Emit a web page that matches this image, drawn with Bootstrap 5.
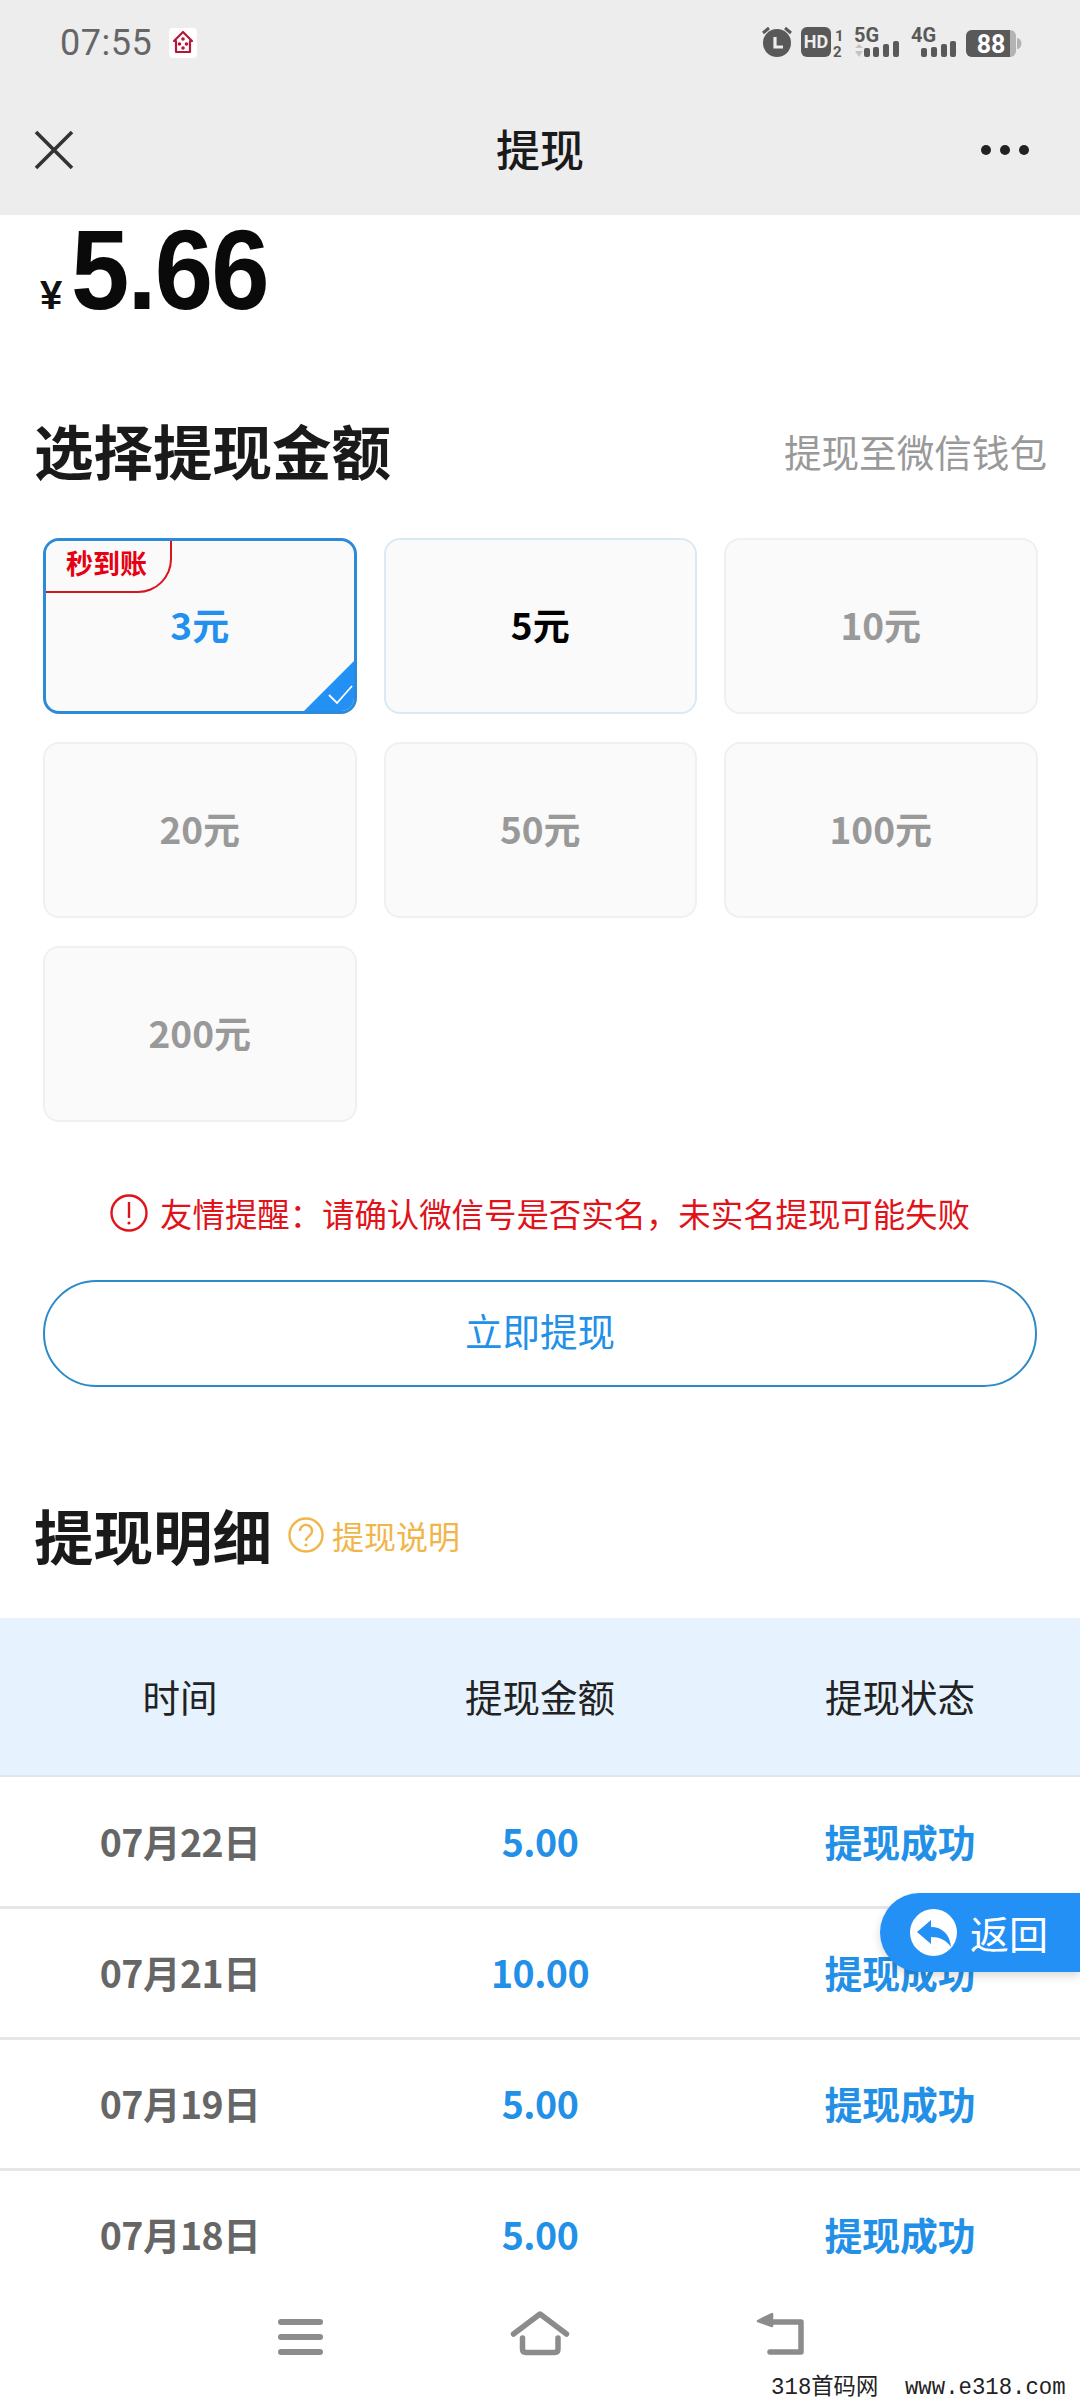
<!DOCTYPE html>
<html lang="zh">
<head>
  <meta charset="UTF-8">
  <title>提现</title>
  <link href="https://cdn.jsdelivr.net/npm/bootstrap@5.3.3/dist/css/bootstrap.min.css" rel="stylesheet">
  <style>
    body { font-family: "Noto Sans CJK SC", "Liberation Sans", sans-serif; background: #fff; }
    .phone { width: 1080px; height: 2400px; overflow: hidden; position: relative; background: #fff; }

    .topbar { height: 215px; background: #ededed; }
    .statusbar { height: 85px; padding: 0 58px 0 60px; }
    .clock { font-family: Roboto, sans-serif; font-size: 36px; color: #666; line-height: 1; letter-spacing: .5px; }
    .titlebar { height: 130px; padding: 0 50px 0 34px; position: relative; }
    .page-title { font-size: 44px; font-weight: 500; color: #1a1a1a; position: absolute; left: 0; right: 0; text-align: center; line-height: 1; top: 41px; }

    .amount-box { height: 194px; padding: 0 0 0 40px; align-items: baseline; margin-top: -3px; margin-bottom: 3px; }
    .yen { font-family: "Liberation Sans", sans-serif; font-weight: 700; font-size: 40px; color: #111; margin-right: 9px; line-height: 1; }
    .amount { font-family: "Liberation Sans", sans-serif; font-weight: 700; font-size: 114px; color: #0a0a0a; line-height: 116px; letter-spacing: -2px; display: inline-block; transform: scaleX(.92); transform-origin: left center; }

    .sec-head { font-size: 59.5px; font-weight: 700; color: #1a1a1a; line-height: 80px; }
    .pick-head { padding: 0 33px 0 34px; }
    .pick-note { font-size: 37.6px; color: #999; line-height: 1; margin-top: 3px; }

    .tile-grid { display: grid; grid-template-columns: repeat(3, 313.5px); gap: 28px 27px; padding: 0 43px; margin-top: 49px; }
    .tile { height: 176px; border: 2px solid #f0f0f0; border-radius: 16px; background: #fafafa; font-size: 37px; font-weight: 700; color: #999; position: relative; overflow: hidden; padding-bottom: 2px; }
    .tile-light { border-color: #d9eaf4; color: #000; }
    .tile-on { border: 3px solid #2d8ad6; color: #2390f0; }
    .fast-tag { position: absolute; left: -3px; top: -3px; width: 129px; height: 55px; border: 2px solid #d8141c; border-width: 0 2px 2px 0; border-bottom-right-radius: 34px; background: #fafafa; color: #e60012; font-size: 27px; font-weight: 700; line-height: 50px; text-align: center; }
    .corner { position: absolute; right: -3px; bottom: -3px; width: 56px; height: 56px; }

    .warn-line { margin-top: 66px; height: 50px; color: #e1131a; font-size: 32.4px; line-height: 50px; gap: 12px; }
    .go-btn { display: block; width: 994px; height: 107px; margin: 42px 0 0 43px; border: 2px solid #2d8ac8; border-radius: 54px; background: #fff; color: #2390e8; font-size: 37.5px; line-height: 1; text-align: center; padding: 0 0 8px; }

    .detail-head { margin-top: 107px; padding-left: 34px; margin-bottom: 44px; }
    .help-link { color: #f0b64a; font-size: 32px; line-height: 1; gap: 8px; margin: 2px 0 0 16px; }

    .cash-table { width: 100%; table-layout: fixed; border-collapse: collapse; }
    .cash-table th { height: 158px; background: #e6f2fe; font-size: 37.5px; font-weight: 400; color: #222; text-align: center; vertical-align: middle; border-bottom: 2px solid #dfe5ea; }
    .cash-table td { height: 131px; font-size: 37.5px; font-weight: 700; text-align: center; vertical-align: middle; border-bottom: 3px solid #e6e6e6; color: #666; letter-spacing: -.5px; }
    .cash-table td.money { color: #2390e8; }
    .cash-table td.state { color: #2390e8; letter-spacing: 0; font-size: 37.8px; }

    .back-float { position: absolute; right: 0; top: 1893px; width: 200px; height: 79px; background: #2390f5; border-radius: 40px 0 0 40px; box-shadow: 0 4px 10px rgba(0, 0, 0, .15); color: #fff; font-size: 39px; padding-left: 30px; gap: 13px; }

    .bottom-nav { position: absolute; left: 0; right: 0; bottom: 0; height: 122px; background: #fff; }
    .bottom-nav svg { position: absolute; top: 0; }
    .nav-menu { left: 277px; }
    .nav-home { left: 510px; }
    .nav-back { left: 755px; }
    .watermark { position: absolute; right: 14px; bottom: 0; font-family: "Liberation Mono", "Noto Sans CJK SC", monospace; font-size: 23px; line-height: 24px; color: #222; white-space: pre; transform-origin: right bottom; transform: scaleX(.97); }
  </style>
</head>
<body class="m-0">
<div class="phone">

  <!-- top gray bar -->
  <div class="topbar">
    <div class="statusbar d-flex align-items-center justify-content-between">
      <div class="d-flex align-items-center">
        <span class="clock">07:55</span>
        <svg class="ms-3" width="30" height="32" viewBox="0 0 30 32">
          <rect x="1" y="1" width="28" height="30" rx="4" fill="#fff"/>
          <path d="M15 5 L24 14 L22 14 L22 25 L8 25 L8 14 L6 14 Z" fill="none" stroke="#b5173a" stroke-width="2.2" stroke-linejoin="round"/>
          <circle cx="15" cy="12" r="1.8" fill="#b5173a"/>
          <circle cx="11.5" cy="17" r="1.8" fill="#b5173a"/>
          <circle cx="18.5" cy="17" r="1.8" fill="#b5173a"/>
          <circle cx="15" cy="21" r="1.8" fill="#b5173a"/>
        </svg>
      </div>
      <svg width="262" height="60" viewBox="760 13 262 60" font-family="Roboto, sans-serif" font-weight="700">
        <!-- alarm -->
        <circle cx="777" cy="43" r="14" fill="#595959"/>
        <path d="M763 33 L769 28 M791 33 L785 28" stroke="#595959" stroke-width="3"/>
        <path d="M775 37 V47 H783" stroke="#ededed" stroke-width="3.2" fill="none"/>
        <!-- HD -->
        <rect x="801" y="27" width="30" height="30" rx="6" fill="#595959"/>
        <text x="816" y="48" font-size="18" fill="#ededed" text-anchor="middle">HD</text>
        <text x="835" y="41" font-size="15" fill="#595959">1</text>
        <text x="833" y="57" font-size="15" fill="#595959">2</text>
        <!-- 5G -->
        <text x="854" y="42" font-size="20" fill="#595959">5G</text>
        <path d="M859 44 L863 48 H855 Z M859 57 L863 51 H855 Z" fill="#c4c4c4"/>
        <rect x="864" y="48" width="6" height="9" rx="2" fill="#595959"/>
        <rect x="873" y="47" width="6" height="10" rx="2" fill="#595959"/>
        <rect x="883" y="44" width="6" height="13" rx="2" fill="#595959"/>
        <rect x="893" y="41" width="6" height="16" rx="2" fill="#595959"/>
        <!-- 4G -->
        <text x="911" y="42" font-size="20" fill="#595959">4G</text>
        <rect x="921" y="48" width="6" height="9" rx="2" fill="#595959"/>
        <rect x="931" y="47" width="6" height="10" rx="2" fill="#595959"/>
        <rect x="941" y="44" width="6" height="13" rx="2" fill="#595959"/>
        <rect x="950" y="41" width="6" height="16" rx="2" fill="#595959"/>
        <!-- battery -->
        <rect x="966" y="30" width="50" height="27" rx="6" fill="#b3b3b3"/>
        <path d="M972 30 H1010 V57 H972 a6 6 0 0 1 -6 -6 V36 a6 6 0 0 1 6 -6 Z" fill="#595959"/>
        <path d="M1017 38 a4 5 0 0 1 0 11 Z" fill="#b3b3b3"/>
        <text x="991" y="53" font-size="25" fill="#fff" text-anchor="middle">88</text>
      </svg>
    </div>
    <div class="titlebar d-flex align-items-center justify-content-between">
      <svg width="40" height="40" viewBox="0 0 40 40"><path d="M2 2 L38 38 M38 2 L2 38" stroke="#333" stroke-width="3.6"/></svg>
      <div class="page-title">提现</div>
      <svg width="50" height="12" viewBox="0 0 50 12" fill="#222"><circle cx="6" cy="6" r="5"/><circle cx="25" cy="6" r="5"/><circle cx="44" cy="6" r="5"/></svg>
    </div>
  </div>

  <!-- balance -->
  <div class="amount-box d-flex">
    <span class="yen">¥</span>
    <span class="amount">5.66</span>
  </div>

  <div class="pick-head d-flex align-items-center justify-content-between">
    <div class="sec-head">选择提现金额</div>
    <div class="pick-note">提现至微信钱包</div>
  </div>

  <!-- amount tiles -->
  <div class="tile-grid">
    <div class="tile tile-on d-flex align-items-center justify-content-center">
      <span class="fast-tag">秒到账</span>
      3元
      <svg class="corner" viewBox="0 0 56 56">
        <path d="M56 0 V56 H0 Z" fill="#2390f5"/>
        <path d="M28 37 L36 45 L51 28" fill="none" stroke="#fff" stroke-width="1.8"/>
      </svg>
    </div>
    <div class="tile tile-light d-flex align-items-center justify-content-center">5元</div>
    <div class="tile d-flex align-items-center justify-content-center">10元</div>
    <div class="tile d-flex align-items-center justify-content-center">20元</div>
    <div class="tile d-flex align-items-center justify-content-center">50元</div>
    <div class="tile d-flex align-items-center justify-content-center">100元</div>
    <div class="tile d-flex align-items-center justify-content-center">200元</div>
  </div>

  <div class="warn-line d-flex align-items-center justify-content-center">
    <svg width="38" height="38" viewBox="0 0 38 38"><circle cx="19" cy="19" r="17.5" fill="none" stroke="#e1131a" stroke-width="2.4"/><path d="M19 8 V24" stroke="#e1131a" stroke-width="2.4"/><circle cx="19" cy="29" r="1.6" fill="#e1131a"/></svg>
    <span>友情提醒：请确认微信号是否实名，未实名提现可能失败</span>
  </div>

  <button type="button" class="btn go-btn">立即提现</button>

  <div class="detail-head d-flex align-items-center">
    <div class="sec-head">提现明细</div>
    <div class="help-link d-flex align-items-center">
      <svg width="36" height="36" viewBox="0 0 36 36"><circle cx="18" cy="18" r="16.5" fill="none" stroke="#f0b64a" stroke-width="2.4"/><path d="M12 14 a6 6 0 1 1 9.5 4.8 c-2 1.4 -3.5 2.4 -3.5 5" fill="none" stroke="#f0b64a" stroke-width="2.4"/><circle cx="18" cy="28" r="1.6" fill="#f0b64a"/></svg>
      <span>提现说明</span>
    </div>
  </div>

  <table class="cash-table">
    <thead>
      <tr><th>时间</th><th>提现金额</th><th>提现状态</th></tr>
    </thead>
    <tbody>
      <tr><td>07月22日</td><td class="money">5.00</td><td class="state">提现成功</td></tr>
      <tr><td>07月21日</td><td class="money">10.00</td><td class="state">提现成功</td></tr>
      <tr><td>07月19日</td><td class="money">5.00</td><td class="state">提现成功</td></tr>
      <tr><td>07月18日</td><td class="money">5.00</td><td class="state">提现成功</td></tr>
    </tbody>
  </table>

  <!-- floating back button -->
  <div class="back-float d-flex align-items-center">
    <svg width="47" height="47" viewBox="0 0 47 47">
      <circle cx="23.5" cy="23.5" r="23.5" fill="#fff"/>
      <path d="M7 23 L21 11 V18 C32 18 40 25 41 38 C36 31 30 28 21 28 V35 Z" fill="#2390f5"/>
    </svg>
    <span>返回</span>
  </div>

  <!-- android nav bar -->
  <div class="bottom-nav">
    <svg class="nav-menu" width="48" height="80" viewBox="0 0 48 80" fill="#8c8c8c">
      <rect x="1" y="41" width="45" height="6" rx="3"/>
      <rect x="1" y="56" width="45" height="6" rx="3"/>
      <rect x="1" y="71" width="45" height="6" rx="3"/>
    </svg>
    <svg class="nav-home" width="60" height="80" viewBox="0 0 60 80" fill="none" stroke="#8c8c8c" stroke-width="5.5" stroke-linecap="round" stroke-linejoin="round">
      <path d="M3.5 56 L30 36 L56.5 56"/>
      <path d="M12.5 60 V71 q0 3.5 3.5 3.5 H44.5 q3.5 0 3.5 -3.5 V60"/>
    </svg>
    <svg class="nav-back" width="52" height="80" viewBox="0 0 52 80" fill="none" stroke="#8c8c8c" stroke-width="5.5" stroke-linecap="round" stroke-linejoin="round">
      <path d="M12 44 H46 V74 H15"/>
      <path d="M3 43 L17 36 V48 Z" fill="#8c8c8c" stroke-width="2.5"/>
    </svg>
    <div class="watermark">318首码网  www.e318.com</div>
  </div>
</div>
<script src="https://cdn.jsdelivr.net/npm/bootstrap@5.3.3/dist/js/bootstrap.bundle.min.js"></script>
</body>
</html>
